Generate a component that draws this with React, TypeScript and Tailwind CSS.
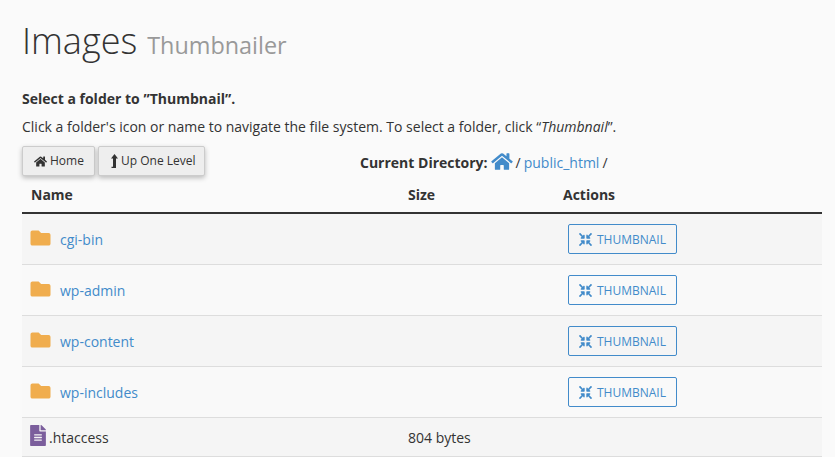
import { FaHome, FaFolder, FaFileAlt, FaCompressArrowsAlt } from 'react-icons/fa';

const folders = ['cgi-bin', 'wp-admin', 'wp-content', 'wp-includes'];

function UpArrow() {
  return (
    <svg viewBox="0 0 8 14" className="h-[14px] w-[8px]" fill="currentColor">
      <path d="M4.5 0 8 4.5H6V14H1.5V12.8H3V4.5H1Z" />
    </svg>
  );
}

function ToolButton({ icon, label, width }: { icon: React.ReactNode; label: string; width: string }) {
  return (
    <button className={`flex h-[30px] items-center gap-[3px] rounded-[2px] border border-[#cccccc] bg-[#eeeeee] pl-[11px] text-[12px] text-[#333333] shadow-[0_2px_5px_rgba(0,0,0,0.26)] ${width}`}>
      {icon}
      {label}
    </button>
  );
}

function FolderRow({ name, striped }: { name: string; striped: boolean }) {
  return (
    <div className={`flex h-[51px] items-center border-b border-[#dddddd] ${striped ? 'bg-[#f5f5f5]' : 'bg-[#f9f9f9]'}`}>
      <div className="flex w-[386px] items-center pl-[8px]">
        <FaFolder className="mb-[3px] h-[20px] w-[21px] text-[#f0ad4e]" />
        <a className="ml-[9px] text-[14px] text-[#428bca]">{name}</a>
      </div>
      <div className="w-[160px]" />
      <button className="flex h-[30px] w-[109px] items-center justify-center gap-[5px] rounded-[2px] border border-[#428bca] pt-[1px] text-[12px] text-[#428bca]">
        <FaCompressArrowsAlt className="h-[13px] w-[13px]" />
        THUMBNAIL
      </button>
    </div>
  );
}

export default function App() {
  return (
    <div className="h-[457px] w-[835px] overflow-hidden bg-[#fafafa] pl-[22px] font-['Open_Sans',sans-serif] text-[14px] text-[#333333]">
      <h1 className="flex h-[67px] items-baseline pt-[16px] text-[36px] leading-[50px] font-light">
        Images
        <span className="ml-[10px] text-[23.4px] font-normal text-[#999999]">Thumbnailer</span>
      </h1>
      <p className="mt-[22px] h-[20px] text-[14px] leading-[20px] font-bold">Select a folder to ”Thumbnail”.</p>
      <p className="mt-[8px] h-[20px] leading-[20px]">
        Click a folder's icon or name to navigate the file system. To select a folder, click “<em>Thumbnail</em>”.
      </p>
      <div className="mt-[9px] flex h-[30px] w-[800px] items-center">
        <div className="flex w-[338px] gap-[3px]">
          <ToolButton icon={<FaHome className="h-[13px] w-[13px]" />} label="Home" width="w-[73px]" />
          <ToolButton icon={<UpArrow />} label="Up One Level" width="w-[107px]" />
        </div>
        <div className="mt-[3px] flex items-center">
          <b className="font-bold">Current Directory:</b>
          <FaHome className="mr-[3px] ml-[3px] mb-[3px] h-[19px] w-[22px] text-[#428bca]" />
          <span>/</span>
          <a className="mx-[3px] text-[#428bca]">public_html</a>
          <span>/</span>
        </div>
      </div>
      <div className="w-[800px]">
        <div className="flex h-[38px] items-center border-b-2 border-[#333333] font-bold">
          <div className="w-[386px] pl-[9px]">Name</div>
          <div className="w-[155px]">Size</div>
          <div>Actions</div>
        </div>
        {folders.map((f, i) => (
          <FolderRow key={f} name={f} striped={i % 2 === 0} />
        ))}
        <div className="flex h-[39px] items-center border-b border-[#dddddd] bg-[#f5f5f5]">
          <div className="flex w-[386px] items-center pl-[8px]">
            <FaFileAlt className="mb-[3px] h-[21px] w-[16px] text-[#7b5e9c]" />
            <span className="ml-[3px]">.htaccess</span>
          </div>
          <div>804 bytes</div>
        </div>
      </div>
    </div>
  );
}
